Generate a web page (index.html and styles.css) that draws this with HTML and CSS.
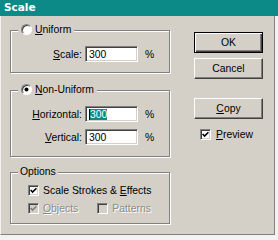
FILE: index.html
```html
<!DOCTYPE html>
<html>
<head>
<meta charset="utf-8">
<link rel="stylesheet" href="styles.css">
</head>
<body>
<div class="window">
  <div class="titlebar">Scale</div>
  <div class="pane">
    <div class="left">
      <div class="group g1">
        <div class="legend"><span class="radio"></span><span><u>U</u>niform</span></div>
        <div class="row">
          <span class="lbl"><u>S</u>cale:</span>
          <span class="field">300</span>
          <span class="pct">%</span>
        </div>
      </div>
      <div class="group g2">
        <div class="legend"><span class="radio on"></span><span><u>N</u>on-Uniform</span></div>
        <div class="row">
          <span class="lbl"><u>H</u>orizontal:</span>
          <span class="field"><span class="caret"></span><span class="sel">300</span></span>
          <span class="pct">%</span>
        </div>
        <div class="row r2">
          <span class="lbl"><u>V</u>ertical:</span>
          <span class="field">300</span>
          <span class="pct">%</span>
        </div>
      </div>
      <div class="group g3">
        <div class="legend text">Options</div>
        <div class="crow">
          <span class="chk"><svg viewBox="0 0 7 7" width="7" height="7"><polyline points="0.6,3 2.6,5 6.4,1.2" fill="none" stroke="#000" stroke-width="1.6"/></svg></span>
          <span>Scale Strokes &amp; <u>E</u>ffects</span>
        </div>
        <div class="crow r2">
          <div class="citem dis">
            <span class="chk dis"><svg viewBox="0 0 7 7" width="7" height="7"><polyline points="0.6,3 2.6,5 6.4,1.2" fill="none" stroke="#808080" stroke-width="1.6"/></svg></span>
            <span class="dtext"><u>O</u>bjects</span>
          </div>
          <div class="citem dis pat">
            <span class="chk dis"></span>
            <span class="dtext">Patterns</span>
          </div>
        </div>
      </div>
    </div>
    <div class="right">
      <div class="btn default">OK</div>
      <div class="btn cancel">Cancel</div>
      <div class="btn copy"><u>C</u>opy</div>
      <div class="crow preview">
        <span class="chk"><svg viewBox="0 0 7 7" width="7" height="7"><polyline points="0.6,3 2.6,5 6.4,1.2" fill="none" stroke="#000" stroke-width="1.6"/></svg></span>
        <span><u>P</u>review</span>
      </div>
    </div>
  </div>
</div>
</body>
</html>
```

FILE: styles.css
```css
html, body {
  margin: 0;
  padding: 0;
  background: #f2f2f2;
}
body {
  width: 278px;
  height: 240px;
  overflow: hidden;
  font-family: "Liberation Sans", Arial, sans-serif;
  font-size: 10.4px;
  color: #000;
}
.window {
  width: 278px;
}
.titlebar {
  height: 16px;
  line-height: 15px;
  background: #0c8a88;
  color: #fff;
  font-family: "DejaVu Sans", sans-serif;
  font-weight: bold;
  font-size: 10.5px;
  padding-left: 4px;
  box-sizing: border-box;
}
.pane {
  width: 275px;
  height: 219px;
  box-sizing: border-box;
  background: #d4d0c8;
  border-left: 1px solid #f4f3ef;
  border-right: 1px solid #808080;
  border-bottom: 1px solid #808080;
  display: flex;
  padding: 14px 0 0 9px;
}
.left {
  width: 161px;
  display: flex;
  flex-direction: column;
}
.group {
  position: relative;
  width: 160px;
  box-sizing: border-box;
  border: 1px solid #808080;
  box-shadow: inset 1px 1px #fff, 1px 1px #fff;
}
.g1 { height: 43px; padding-top: 15px; }
.g2 { height: 67px; padding-top: 15px; margin-top: 17px; }
.g3 { height: 52px; padding-top: 12px; margin-top: 15px; padding-left: 17px; }
.legend {
  position: absolute;
  left: 7px;
  top: -8px;
  height: 13px;
  padding: 0 3px;
  background: #d4d0c8;
  display: flex;
  align-items: center;
  gap: 3px;
}
.legend.text { padding: 0 2px; }
.radio {
  width: 11px;
  height: 11px;
  box-sizing: border-box;
  border-radius: 50%;
  background: #fff;
  border: 1px solid;
  border-color: #808080 #fff #fff #808080;
  box-shadow: inset 1px 1px #404040;
  display: flex;
  align-items: center;
  justify-content: center;
}
.radio.on::after {
  content: "";
  width: 3px;
  height: 3px;
  border-radius: 50%;
  background: #000;
  box-shadow: 0 0 0 0.5px #000;
}
.row {
  display: flex;
  align-items: center;
  height: 16px;
}
.row.r2 { margin-top: 7px; }
.lbl {
  width: 71px;
  text-align: right;
}
.field {
  margin-left: 3px;
  width: 53px;
  height: 16px;
  box-sizing: border-box;
  background: #fff;
  border: 1px solid;
  border-color: #808080 #fff #fff #808080;
  box-shadow: inset 1px 1px #404040, inset -1px -1px #d4d0c8;
  display: flex;
  align-items: center;
  padding-left: 3px;
}
.caret {
  width: 1px;
  height: 11px;
  background: #000;
}
.sel {
  background: #0c8a88;
  color: #fff;
  line-height: 11px;
}
.pct {
  margin-left: 7px;
}
.crow {
  display: flex;
  align-items: center;
  height: 11px;
  gap: 4px;
}
.crow.r2 {
  margin-top: 7px;
  gap: 0;
}
.citem {
  display: flex;
  align-items: center;
  gap: 4px;
}
.citem.pat {
  margin-left: 19px;
}
.chk {
  width: 11px;
  height: 11px;
  box-sizing: border-box;
  background: #fff;
  border: 1px solid;
  border-color: #808080 #fff #fff #808080;
  box-shadow: inset 1px 1px #404040, inset -1px -1px #d4d0c8;
  display: flex;
  align-items: center;
  justify-content: center;
}
.chk svg { display: block; }
.chk.dis { background: #d4d0c8; }
.dtext {
  color: #8f8c84;
  text-shadow: 1px 1px #fff;
}
.right {
  margin-left: 23px;
  padding-top: 2px;
  display: flex;
  flex-direction: column;
}
.btn {
  width: 69px;
  height: 21px;
  box-sizing: border-box;
  border: 1px solid;
  border-color: #fff #404040 #404040 #fff;
  box-shadow: inset -1px -1px #808080;
  display: flex;
  align-items: center;
  justify-content: center;
}
.btn.default {
  border-color: #000;
  box-shadow: inset 1px 1px #fff, inset -1px -1px #404040, inset -2px -2px #808080;
}
.btn.cancel { margin-top: 5px; }
.btn.copy { margin-top: 19px; }
.crow.preview {
  margin-top: 10px;
  margin-left: 6px;
  gap: 5px;
}
u { text-decoration-thickness: 1px; text-underline-offset: 1px; }
```
